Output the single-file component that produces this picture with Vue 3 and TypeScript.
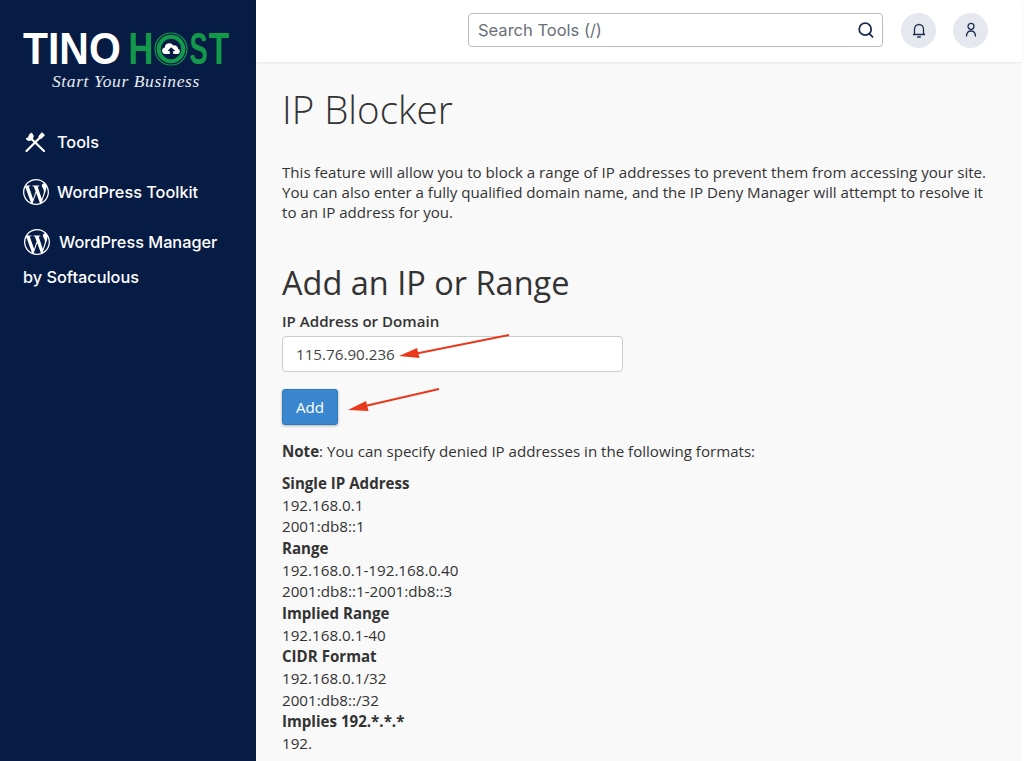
<script setup lang="ts">
interface Row { text: string; bold?: boolean }
const rows: Row[] = [
  { text: 'Single IP Address', bold: true },
  { text: '192.168.0.1' },
  { text: '2001:db8::1' },
  { text: 'Range', bold: true },
  { text: '192.168.0.1-192.168.0.40' },
  { text: '2001:db8::1-2001:db8::3' },
  { text: 'Implied Range', bold: true },
  { text: '192.168.0.1-40' },
  { text: 'CIDR Format', bold: true },
  { text: '192.168.0.1/32' },
  { text: '2001:db8::/32' },
  { text: 'Implies 192.*.*.*', bold: true },
  { text: '192.' },
]
const wp = 'M21.469 6.825c.84 1.537 1.318 3.3 1.318 5.175 0 3.979-2.156 7.456-5.363 9.325l3.295-9.527c.615-1.54.82-2.771.82-3.864 0-.405-.026-.78-.07-1.11m-7.981.105c.647-.03 1.232-.105 1.232-.105.582-.075.514-.93-.067-.899 0 0-1.755.135-2.88.135-1.064 0-2.85-.15-2.85-.15-.585-.03-.661.855-.075.885 0 0 .54.061 1.125.09l1.68 4.605-2.37 7.08L5.354 6.9c.649-.03 1.234-.1 1.234-.1.585-.075.516-.93-.065-.896 0 0-1.746.138-2.874.138-.2 0-.438-.008-.69-.015C4.911 3.15 8.235 1.215 12 1.215c2.809 0 5.365 1.072 7.286 2.833-.046-.003-.091-.009-.141-.009-1.06 0-1.812.923-1.812 1.914 0 .89.513 1.643 1.06 2.531.411.72.89 1.643.89 2.977 0 .915-.354 1.994-.821 3.479l-1.075 3.585-3.9-11.61.001.014zM12 22.784c-1.059 0-2.081-.153-3.048-.437l3.237-9.406 3.315 9.087c.024.053.05.101.078.149-1.12.393-2.325.609-3.582.609M1.211 12c0-1.564.336-3.05.935-4.39L7.29 21.709C3.694 19.96 1.212 16.271 1.211 12M12 0C5.385 0 0 5.385 0 12s5.385 12 12 12 12-5.385 12-12S18.615 0 12 0'
</script>

<template>
  <div class="page">
    <aside class="side">
      <div class="logo">
        <div class="wordmark">
          <span class="tino">TINO</span>
          <span class="host">
            <span class="ch ch-h">H</span>
            <svg class="o" viewBox="0 0 34 34" width="34" height="34">
              <circle cx="17" cy="17" r="16" fill="none" stroke="#12994a" stroke-width="1.2" />
              <circle cx="17" cy="17" r="12.3" fill="none" stroke="#12994a" stroke-width="4" />
              <path d="M10.5 22a3.4 3.4 0 0 1 .3-6.600 4.400 4.400 0 0 1 4-4.100 4.800 4.800 0 0 1 4.500 2.200 3.700 3.700 0 0 1 4.800 3.200 2.800 2.800 0 0 1-.3 5.300h-4.600v-3h2.200L17 15.300 13.600 19h2.200v3z" fill="#fff" />
            </svg>
            <span class="ch ch-s">S</span>
            <span class="ch ch-t">T</span>
          </span>
        </div>
        <div class="tagline">Start Your Business</div>
      </div>
      <nav class="nav">
        <a class="item">
          <svg class="tools" viewBox="0 0 22 22" width="22" height="22" fill="none" stroke="#fff" stroke-linecap="round" stroke-linejoin="round">
            <path d="M2.500 20 15.500 7" stroke-width="2.200" />
            <path d="M15.200 5.500 18 2.200l2 2-3.200 2.900z" fill="#fff" stroke-width="1.600" />
            <path d="M8 8.500 20 20" stroke-width="2.200" />
            <path d="M7.800 2.300a4 4 0 0 1 1 4.800L7 9a4 4 0 0 1-5-1.200l2.500-1.300L5.600 3.600z" fill="#fff" stroke-width="1" />
          </svg>
          <span>Tools</span>
        </a>
        <a class="item">
          <svg class="wp" viewBox="0 0 24 24" width="26" height="26"><path :d="wp" fill="#fff" /></svg>
          <span>WordPress Toolkit</span>
        </a>
        <a class="item manager">
          <svg class="wp" viewBox="0 0 24 24" width="26" height="26"><path :d="wp" fill="#fff" /></svg>
          <span>WordPress Manager</span>
        </a>
        <div class="by">by Softaculous</div>
      </nav>
    </aside>
    <div class="right">
      <header class="top">
        <div class="search">
          <span>Search Tools (/)</span>
          <svg viewBox="0 0 18 18" width="18" height="18" fill="none" stroke="#1d2d4e" stroke-width="1.800" stroke-linecap="round">
            <circle cx="8.200" cy="8.200" r="6" />
            <path d="m12.600 12.800 3 3" />
          </svg>
        </div>
        <div class="round">
          <svg viewBox="0 0 18 18" width="18" height="18" fill="none" stroke="#1d2d4e" stroke-width="1.300" stroke-linecap="round" stroke-linejoin="round">
            <path d="M4.500 12.500V8a4.500 4.500 0 0 1 9 0v4.500l1 1h-11z" />
            <path d="M7.700 16h2.600" />
          </svg>
        </div>
        <div class="round">
          <svg viewBox="0 0 18 18" width="18" height="18" fill="none" stroke="#1d2d4e" stroke-width="1.300" stroke-linecap="round">
            <circle cx="9" cy="5.300" r="3" />
            <path d="M4.500 15c.2-3 2-5 4.500-5s4.300 2 4.500 5" />
          </svg>
        </div>
      </header>
      <main class="main">
        <h1>IP Blocker</h1>
        <p class="intro">This feature will allow you to block a range of IP addresses to prevent them from accessing your site. You can also enter a fully qualified domain name, and the IP Deny Manager will attempt to resolve it to an IP address for you.</p>
        <h2>Add an IP or Range</h2>
        <label class="lbl">IP Address or Domain</label>
        <div class="field">
          <div class="input">115.76.90.236</div>
          <svg class="arrow a1" viewBox="0 0 120 40" width="120" height="40">
            <path d="M111 1 16 20" stroke="#e8391d" stroke-width="2" fill="none" />
            <path d="M1 22 19 14l2.500 10z" fill="#e8391d" />
          </svg>
        </div>
        <div class="btnrow">
          <button class="add" type="button">Add</button>
          <svg class="arrow a2" viewBox="0 0 100 30" width="100" height="30">
            <path d="M92 3 16 20.500" stroke="#e8391d" stroke-width="2" fill="none" />
            <path d="M1 24 19 15l2.500 10z" fill="#e8391d" />
          </svg>
        </div>
        <p class="note"><b>Note</b>: You can specify denied IP addresses in the following formats:</p>
        <div class="list">
          <div v-for="r in rows" :key="r.text" :class="{ strong: r.bold }">{{ r.text }}</div>
        </div>
      </main>
    </div>
  </div>
</template>

<style>
html, body { margin: 0; height: 100%; overflow: hidden; background: #f9f9f9; }
</style>

<style scoped>
.page {
  display: flex;
  width: 1024px;
  height: 761px;
  overflow: hidden;
  font-family: "Open Sans", sans-serif;
  color: #333;
}
.side {
  width: 256px;
  flex: none;
  background: #071c45;
  color: #fff;
  padding: 32px 0 0 23px;
  box-sizing: border-box;
  font-family: Inter, sans-serif;
}
.wordmark {
  display: flex;
  align-items: center;
  height: 34px;
  font-family: "Liberation Sans", sans-serif;
  font-weight: 700;
  font-size: 44px;
  line-height: 34px;
}
.tino {
  color: #fff;
  width: 105px;
  flex: none;
  transform: scaleX(.93);
  transform-origin: left center;
}
.host { color: #12994a; display: flex; align-items: center; }
.ch { display: flex; justify-content: center; flex: none; }
.ch-h { width: 26px; transform: scaleX(.78); }
.ch-s { width: 19px; margin-left: 1px; transform: scaleX(.62); }
.ch-t { width: 22px; transform: scaleX(.76); }
.o { flex: none; }
.tagline {
  font-family: "Liberation Serif", serif;
  font-style: italic;
  font-size: 17.500px;
  line-height: 20px;
  margin: 5px 0 0 29px;
  letter-spacing: .6px;
  color: #e8ebf0;
}
.nav { margin-top: 38px; font-size: 16.300px; font-weight: 500; }
.item { display: flex; align-items: center; height: 26px; margin-bottom: 24px; gap: 8px; }
.tools { margin: 0 11px 0 1px; }
.item:first-child { gap: 0; }
.manager { gap: 9px; margin-bottom: 9px; }
.manager .wp { margin-left: 1px; }
.by { line-height: 26px; }
.right { flex: 1; min-width: 0; display: flex; flex-direction: column; border-right: 2px solid #fff; }
.top {
  height: 62px;
  flex: none;
  box-sizing: border-box;
  background: #fff;
  box-shadow: 0 1px 2px rgba(0, 0, 0, .08);
  display: flex;
  align-items: center;
  padding: 0 34px 2px 212px;
  gap: 17px;
  position: relative;
}
.search {
  width: 415px;
  flex: none;
  height: 34px;
  box-sizing: border-box;
  background: #fff;
  border: 1px solid #b3bcc6;
  border-radius: 4px;
  display: flex;
  align-items: center;
  justify-content: space-between;
  padding: 0 7px 0 9px;
  font-family: Inter, sans-serif;
  font-size: 16.500px;
  color: #6a6f78;
  margin-right: 1px;
}
.round {
  width: 35px;
  height: 35px;
  flex: none;
  border-radius: 50%;
  background: #e5e8ee;
  display: flex;
  align-items: center;
  justify-content: center;
}
.main { padding: 0 0 0 26px; position: relative; }
h1 {
  font-size: 38.500px;
  font-weight: 300;
  line-height: 50px;
  margin: 22px 0 0;
}
.intro {
  font-size: 15.100px;
  line-height: 20px;
  width: 716px;
  margin: 28px 0 0;
}
h2 {
  font-size: 32.500px;
  font-weight: 400;
  line-height: 40px;
  margin: 41px 0 0;
}
.lbl { display: block; font-size: 15.100px; font-weight: 600; line-height: 20px; margin-top: 8px; }
.field { position: relative; margin-top: 5px; }
.input {
  width: 341px;
  height: 36px;
  box-sizing: border-box;
  border: 1px solid #ccc;
  border-radius: 4px;
  background: #fff;
  padding: 0 13px;
  font-size: 15.200px;
  line-height: 35px;
  color: #444;
}
.arrow { position: absolute; }
.a1 { left: 116px; top: -2px; }
.a2 { left: 65px; top: -3px; }
.btnrow { position: relative; margin-top: 17px; }
.add {
  display: block;
  width: 56px;
  height: 36px;
  background: #3a87cf;
  border: 1px solid #2f78bd;
  border-radius: 3px;
  color: #fff;
  font: 15.200px "Open Sans", sans-serif;
  box-shadow: 0 1px 3px rgba(0, 0, 0, .3);
  padding: 0;
}
.note { font-size: 15.100px; line-height: 21px; margin: 16px 0 0; }
.list { margin-top: 11px; font-size: 15.200px; line-height: 21.650px; }
.strong { font-weight: 700; font-size: 15.100px; }
</style>
